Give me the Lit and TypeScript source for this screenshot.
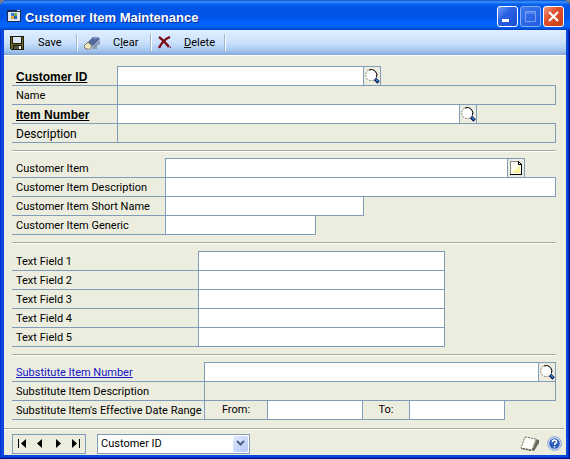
import { LitElement, html, css, svg, nothing, TemplateResult } from "lit";
import { customElement, property } from "lit/decorators.js";
import { classMap } from "lit/directives/class-map.js";

const sheet = css`
  * {
    box-sizing: border-box;
  }
  button,
  input,
  select {
    font: inherit;
    color: inherit;
    margin: 0;
    padding: 0;
    border: 0;
    border-radius: 0;
    background: none;
  }
  button {
    display: flex;
    align-items: center;
    justify-content: center;
  }
  svg {
    display: block;
    flex: none;
  }
`;

const appIcon = svg`<svg width="14" height="12" viewBox="0 0 14 12" shape-rendering="crispEdges">
  <rect width="14" height="12" fill="#1c2c50"/><rect x="1" y="2" width="12" height="9" fill="#dce8f4"/>
  <rect x="10" width="3" height="1" fill="#d8d8d8"/>
  <rect x="4" y="3" width="3" height="3" fill="#3e82d8"/><rect x="7" y="3" width="3" height="3" fill="#78a850"/>
  <rect x="4" y="6" width="3" height="3" fill="#e8a830"/><rect x="7" y="6" width="3" height="3" fill="#2860b8"/></svg>`;

const saveIcon = svg`<svg width="14" height="14" viewBox="0 0 14 14" shape-rendering="crispEdges">
  <path d="M0 0H14V14H1L0 13Z" fill="#1c1c08"/><path d="M1 1H13V13H1Z" fill="#6c6a2a"/>
  <rect x="2" y="0" width="10" height="8" fill="#1c1c08"/><rect x="3" y="1" width="8" height="6" fill="#dce6f2"/>
  <rect x="3" y="9" width="9" height="5" fill="#1c1c08"/><rect x="4" y="10" width="5" height="3" fill="#55564c"/>
  <rect x="9" y="10" width="2" height="3" fill="#f4f4f4"/></svg>`;

const clearIcon = svg`<svg width="17" height="14" viewBox="0 0 17 14">
  <path d="M8 13L9 10L16 4V8L13 10V13Z" fill="#8b9bb4"/>
  <path d="M9 1H14L16 3L9 10L4 6Z" fill="#54689c"/><path d="M10 1H14L13 3H9Z" fill="#8096c4"/>
  <path d="M4 6L8 10L6 13H2L0 11V10Z" fill="#efe3b8" stroke="#7b7564"/>
  <path d="M2 10L4 12H6" fill="none" stroke="#fff8dc"/></svg>`;

const deleteIcon = svg`<svg width="14" height="13" viewBox="0 0 14 13">
  <path d="M1 1C4 3 8 7 11 11M12 1C7 3 3 8 1 12" fill="none" stroke="#7c0c14" stroke-width="2.4"/>
  <rect x="12" y="11" width="1" height="1" fill="#7c0c14"/></svg>`;

const lensIcon = svg`<svg width="16" height="16" viewBox="0 0 16 16">
  <circle cx="7.3" cy="7" r="5.6" fill="#fff" stroke="#8a8a8a" stroke-width="1" stroke-dasharray="2 1"/>
  <path d="M5 2A5.6 5.6 0 0 1 12.3 9.5" fill="none" stroke="#111" stroke-width="1"/>
  <path d="M11 11L14.6 14.4" stroke="#101850" stroke-width="3.4"/>
  <path d="M11.6 11.2L14 13.6" stroke="#2b90e0" stroke-width="1.4"/></svg>`;

const noteIcon = svg`<svg width="14" height="16" viewBox="0 0 14 16" shape-rendering="crispEdges">
  <path d="M1 1H9L12 4V14H1Z" fill="#fffff4"/><path d="M11 6V13H4V11H6V9H8V7H10V6Z" fill="#f8f6a0"/>
  <path d="M1.5 14V1.5H9" fill="none" stroke="#8c8c8c"/>
  <path d="M9 1H10V2H11V3H12V4H13V15H1V14H12V5H9Z" fill="#000"/><rect x="10" y="3" width="1" height="1" fill="#fff"/></svg>`;

const pageIcon = svg`<svg width="20" height="16" viewBox="0 0 20 16">
  <path d="M15 3L19 4V7L14 15L11 14Z" fill="#686858"/>
  <path d="M5 1L16 3L12 14L1 12Z" fill="#fdfdfa" stroke="#68685c" stroke-width="1" stroke-dasharray="2 1"/>
  <path d="M1 12.5L11 14.5" stroke="#68685c"/><path d="M16 4L13 12" stroke="#a8a894"/></svg>`;

const helpIcon = svg`<svg width="15" height="15" viewBox="0 0 15 15">
  <circle cx="7.5" cy="7.5" r="6.8" fill="#dfe8f6" stroke="#7e9dd4"/>
  <circle cx="7.5" cy="7.5" r="5.3" fill="#2a5cb8"/>
  <path d="M5.4 6.2C5.4 3.4 9.7 3.5 9.6 5.9C9.5 7.3 7.7 7.2 7.6 9M7.5 10.2V11.6" fill="none" stroke="#fff" stroke-width="1.6"/></svg>`;

const navShapes: Array<[string, string]> = [
  ["First record", "M1 1H2V10H1ZM9 1V10L4 5.5Z"],
  ["Previous record", "M7 1V10L2 5.5Z"],
  ["Next record", "M3 1V10L8 5.5Z"],
  ["Last record", "M8 1H9V10H8ZM1 1V10L6 5.5Z"],
];

@customElement("form-row")
class FormRow extends LitElement {
  @property() label = "";
  @property() size = "full";
  @property() action = "";
  @property() tone = "";
  @property({ type: Boolean }) locked = false;

  static styles = [
    sheet,
    css`
      :host {
        display: flex;
        height: 19px;
      }
      .label {
        flex: 0 0 var(--label-width);
        padding-left: 4px;
        border-bottom: 1px solid var(--line);
        line-height: 20px;
        white-space: nowrap;
      }
      .large {
        font-size: 12px;
      }
      .key {
        font-family: "Liberation Sans", Arial, sans-serif;
        font-size: 12px;
        font-weight: bold;
        text-decoration: underline;
      }
      .link {
        color: #1414c8;
      }
      .box {
        display: flex;
        flex: 0 1 var(--box-width);
        min-width: 0;
        height: 20px;
        margin-top: -1px;
        border: 1px solid var(--line);
      }
      .full {
        flex: 1 1 0;
      }
      .wide {
        --box-width: 360px;
      }
      .medium {
        --box-width: 264px;
      }
      .field {
        --box-width: 247px;
      }
      .short {
        --box-width: 199px;
      }
      .tiny {
        --box-width: 151px;
      }
      .code {
        flex: 1 1 0;
        margin-right: 31px;
      }
      input {
        flex: 1;
        min-width: 0;
        padding: 0 4px;
        background: #fff;
        outline: none;
      }
      input[readonly] {
        background: var(--face);
      }
      button {
        flex: 0 0 17px;
        border-left: 1px solid var(--line);
      }
    `,
  ];

  render() {
    const kind = classMap({ label: true, [this.tone === "link" ? "plain" : this.tone || "plain"]: true });
    return html`
      <label class=${kind} for="entry"
        >${this.tone === "link" ? html`<a class="link" href="#item">${this.label}</a>` : this.label}</label
      >
      <div class=${classMap({ box: true, [this.size]: true })}>
        <input id="entry" ?readonly=${this.locked} />
        ${this.action
          ? html`<button aria-label=${this.action === "note" ? "Note" : "Look up"}>
              ${this.action === "note" ? noteIcon : lensIcon}
            </button>`
          : nothing}
      </div>
    `;
  }
}

@customElement("app-root")
class AppRoot extends LitElement {
  static styles = [
    sheet,
    css`
      :host {
        --line: #7f9db9;
        --face: #ecedde;
        display: block;
        background: #7d7f86;
        color: #000;
        font-family: Roboto, "Liberation Sans", Arial, sans-serif;
        font-size: 11px;
      }
      .window {
        display: flex;
        flex-direction: column;
        min-height: 100vh;
        padding: 0 4px 4px;
        border-radius: 8px 8px 0 0;
        background: #0a48dc;
        box-shadow: inset -1px -1px #00138c, inset 1px 0 #0831d9, inset -2px -2px #0030c4;
        overflow: hidden;
      }
      .title {
        display: flex;
        align-items: center;
        height: 30px;
        margin: 0 -4px;
        padding: 2px 6px 0 7px;
        background: linear-gradient(#0a50d0, #3a94ff 2px, #0a62f0 4px, #0054e3 8px, #0055ea 18px, #0066ff 24px, #0062f4 27px, #003fc4);
      }
      h1 {
        flex: 1;
        margin: 0;
        padding: 3px 0 0 4px;
        font-family: "Liberation Sans", Arial, sans-serif;
        font-size: 13px;
        line-height: 16px;
        color: #fff;
        text-shadow: 1px 1px #0a2a8c;
      }
      .controls {
        display: flex;
        gap: 2px;
      }
      .controls button {
        width: 21px;
        height: 21px;
        border: 1px solid #fff;
        border-radius: 3px;
        background: linear-gradient(135deg, #6f9cf4, #2a62e4 40%, #1c4cd0);
      }
      .controls .dim {
        border-color: #86acf2;
        background: linear-gradient(135deg, #3c78ec, #1f5ae0);
      }
      .controls .close {
        background: linear-gradient(135deg, #f09a80, #e0502c 40%, #c83c14);
      }
      .toolbar {
        display: flex;
        align-items: center;
        height: 26px;
        padding: 0 6px;
        border-bottom: 1px solid #fff;
        background: linear-gradient(#e0efff, #cbe1fb 50%, #a9c8ef 80%, #84a9d8);
      }
      .toolbar button {
        justify-content: flex-start;
        gap: 12px;
        width: 68px;
        height: 17px;
        margin-right: 6px;
        border-right: 1px solid #fff;
        box-shadow: -1px 0 0 0 #9db2cc inset;
      }
      .toolbar .save {
        gap: 14px;
      }
      form {
        flex: 1;
        display: flex;
        flex-direction: column;
        background: var(--face);
      }
      section {
        margin: 0 10px 0 8px;
        padding: 7px 0 8px;
        border-bottom: 1px solid #fff;
        box-shadow: inset 0 -1px #aaa99b;
      }
      .keys {
        --label-width: 105px;
        padding-top: 11px;
      }
      .items {
        --label-width: 153px;
      }
      .texts {
        --label-width: 186px;
        padding-top: 8px;
      }
      .substitute {
        --label-width: 192px;
        border: 0;
        box-shadow: none;
      }
      .range {
        display: flex;
        height: 19px;
        line-height: 20px;
      }
      .caption {
        flex: 0 0 var(--label-width);
        padding-left: 4px;
        border-bottom: 1px solid var(--line);
        white-space: nowrap;
      }
      .range label {
        flex: 0 0 46px;
        border-bottom: 1px solid var(--line);
        line-height: 18px;
        text-align: center;
      }
      .range .from {
        flex-basis: 63px;
        border-left: 1px solid var(--line);
      }
      .range input {
        flex: 0 1 96px;
        min-width: 0;
        height: 20px;
        margin-top: -1px;
        padding: 0 4px;
        border: 1px solid var(--line);
        background: #fff;
      }
      footer {
        display: flex;
        align-items: center;
        flex: 1 0 auto;
        margin-right: 2px;
        padding: 4px 0 1px 8px;
        border-top: 1px solid #aaa99b;
        box-shadow: inset 0 1px #fff;
      }
      .nav {
        display: flex;
        justify-content: space-around;
        width: 74px;
        height: 20px;
        border: 1px solid var(--line);
      }
      .sort {
        display: flex;
        position: relative;
        width: 153px;
        height: 20px;
        margin-left: 11px;
        border: 1px solid var(--line);
        background: #fff;
      }
      select {
        flex: 1;
        padding-left: 3px;
        appearance: none;
      }
      .arrow {
        position: absolute;
        right: 1px;
        top: 1px;
        display: grid;
        place-items: center;
        width: 15px;
        height: 16px;
        border-radius: 2px;
        background: linear-gradient(135deg, #e0e9ff, #b4c9f6);
        pointer-events: none;
      }
      .tools {
        display: flex;
        align-items: center;
        gap: 7px;
        margin-left: auto;
        padding-right: 2px;
      }
    `,
  ];

  private navButton([name, shape]: [string, string]): TemplateResult {
    return html`<button type="button" aria-label=${name}>
      <svg width="10" height="11" viewBox="0 0 10 11"><path d=${shape} /></svg>
    </button>`;
  }

  render() {
    return html`
      <main class="window">
        <header class="title">
          ${appIcon}
          <h1>Customer Item Maintenance</h1>
          <div class="controls">
            <button aria-label="Minimize">
              <svg width="19" height="19" viewBox="0 0 19 19"><path d="M4 12H11V15H4Z" fill="#fff" /></svg>
            </button>
            <button class="dim" aria-label="Maximize" disabled>
              <svg width="19" height="19" viewBox="0 0 19 19">
                <path d="M4.5 4.5H14.5V14.5H4.5ZM4 6H15" fill="none" stroke="#7b9cf0" />
              </svg>
            </button>
            <button class="close" aria-label="Close">
              <svg width="19" height="19" viewBox="0 0 19 19">
                <path d="M5 5L14 14M14 5L5 14" stroke="#fff" stroke-width="2.2" />
              </svg>
            </button>
          </div>
        </header>
        <nav class="toolbar">
          <button class="save">${saveIcon}<span>Save</span></button>
          <button>${clearIcon}<span>C<u>l</u>ear</span></button>
          <button>${deleteIcon}<span><u>D</u>elete</span></button>
        </nav>
        <form @submit=${(e: Event) => e.preventDefault()}>
          <section class="keys">
            <form-row label="Customer ID" tone="key" size="medium" action="find"></form-row>
            <form-row label="Name" locked></form-row>
            <form-row label="Item Number" tone="key" size="wide" action="find"></form-row>
            <form-row label="Description" tone="large" locked></form-row>
          </section>
          <section class="items">
            <form-row label="Customer Item" size="code" action="note"></form-row>
            <form-row label="Customer Item Description"></form-row>
            <form-row label="Customer Item Short Name" size="short"></form-row>
            <form-row label="Customer Item Generic" size="tiny"></form-row>
          </section>
          <section class="texts">
            ${[1, 2, 3, 4, 5].map((n) => html`<form-row label=${`Text Field ${n}`} size="field"></form-row>`)}
          </section>
          <section class="substitute">
            <form-row label="Substitute Item Number" tone="link" action="find"></form-row>
            <form-row label="Substitute Item Description" locked></form-row>
            <div class="range">
              <span class="caption">Substitute Item's Effective Date Range</span>
              <label class="from" for="from">From:</label>
              <input id="from" />
              <label for="to">To:</label>
              <input id="to" />
            </div>
          </section>
          <footer>
            <div class="nav">${navShapes.map((n) => this.navButton(n))}</div>
            <div class="sort">
              <select aria-label="Sort by">
                <option>Customer ID</option>
              </select>
              <span class="arrow">
                <svg width="9" height="7" viewBox="0 0 9 7">
                  <path d="M1 1L4.5 4.5L8 1" fill="none" stroke="#4d6185" stroke-width="2" />
                </svg>
              </span>
            </div>
            <div class="tools">
              <button type="button" aria-label="Record note">${pageIcon}</button>
              <button type="button" aria-label="Help">${helpIcon}</button>
            </div>
          </footer>
        </form>
      </main>
    `;
  }
}
